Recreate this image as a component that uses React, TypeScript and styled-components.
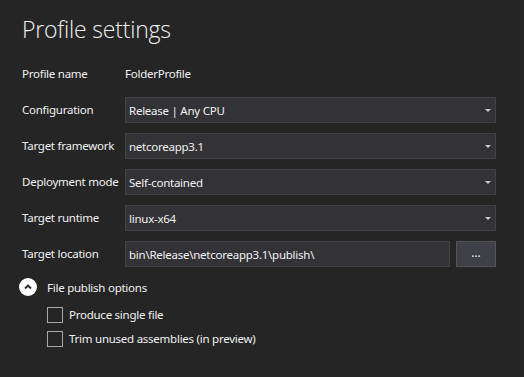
import { Fragment } from "react";
import styled, { createGlobalStyle } from "styled-components";

const GlobalStyle = createGlobalStyle`
  html, body {
    margin: 0;
    background: #252526;
  }
  body {
    font-family: "Noto Sans", "Open Sans", sans-serif;
    color: #f1f1f1;
  }
`;

const Page = styled.div`
  width: 524px;
  height: 377px;
  box-sizing: border-box;
  padding: 13px 28px 0 22px;
  background: #252526;
`;

const Title = styled.h1`
  margin: 0 0 16px 0;
  font-family: "Open Sans", sans-serif;
  font-weight: 300;
  font-size: 23px;
  line-height: 32px;
  color: #f1f1f1;
  letter-spacing: -0.2px;
`;

const Form = styled.div`
  display: grid;
  grid-template-columns: 103px 1fr;
  row-gap: 10px;
  align-items: center;
`;

const Label = styled.div`
  font-size: 11.5px;
  line-height: 26px;
  white-space: nowrap;
  letter-spacing: -0.25px;
`;

const Value = styled.div`
  font-size: 11.5px;
  line-height: 26px;
  letter-spacing: -0.25px;
`;

const Field = styled.div`
  height: 26px;
  box-sizing: border-box;
  display: flex;
  align-items: center;
  justify-content: space-between;
  padding: 0 4px 0 3px;
  background: #333337;
  border: 1px solid #434346;
  font-size: 11.5px;
  letter-spacing: -0.25px;
  flex: 1;
`;

const Caret = styled.span`
  width: 0;
  height: 0;
  border-left: 3px solid transparent;
  border-right: 3px solid transparent;
  border-top: 3px solid #c8c8c8;
  margin-top: 1px;
`;

const PathRow = styled.div`
  display: flex;
  gap: 6px;
`;

const BrowseButton = styled.button`
  width: 40px;
  height: 26px;
  box-sizing: border-box;
  background: #3f3f46;
  border: 1px solid #555558;
  color: #f1f1f1;
  font-family: inherit;
  font-size: 12px;
  padding: 0 0 4px 0;
`;

const Section = styled.div`
  margin-top: 11px;
  display: flex;
  align-items: center;
  gap: 10px;
  margin-left: -3px;
  font-size: 11.5px;
  letter-spacing: -0.25px;
`;

const ExpandIcon = styled.span`
  width: 18px;
  height: 18px;
  border-radius: 50%;
  background: #ffffff;
  display: flex;
  align-items: center;
  justify-content: center;
`;

const Options = styled.div`
  margin-top: 11px;
  margin-left: 25px;
  display: flex;
  flex-direction: column;
  gap: 8px;
`;

const CheckRow = styled.label`
  display: flex;
  align-items: center;
  gap: 6px;
  font-size: 11.5px;
  line-height: 16px;
  letter-spacing: -0.25px;
`;

const Box = styled.span`
  width: 16px;
  height: 16px;
  box-sizing: border-box;
  border: 1px solid #a8a8a8;
  background: #252526;
`;

const dropdowns = [
  ["Configuration", "Release | Any CPU"],
  ["Target framework", "netcoreapp3.1"],
  ["Deployment mode", "Self-contained"],
  ["Target runtime", "linux-x64"],
];

export default function App() {
  return (
    <Page>
      <GlobalStyle />
      <Title>Profile settings</Title>
      <Form>
        <Label>Profile name</Label>
        <Value>FolderProfile</Value>
        {dropdowns.map(([label, value]) => (
          <Fragment key={label}>
            <Label>{label}</Label>
            <Field>
              <span>{value}</span>
              <Caret />
            </Field>
          </Fragment>
        ))}
        <Label>Target location</Label>
        <PathRow>
          <Field>bin\Release\netcoreapp3.1\publish\</Field>
          <BrowseButton>...</BrowseButton>
        </PathRow>
      </Form>
      <Section>
        <ExpandIcon>
          <svg width="10" height="10" viewBox="0 0 10 10">
            <path d="M2 6.5 L5 3.5 L8 6.5" fill="none" stroke="#252526" strokeWidth="1.8" />
          </svg>
        </ExpandIcon>
        File publish options
      </Section>
      <Options>
        <CheckRow>
          <Box />
          Produce single file
        </CheckRow>
        <CheckRow>
          <Box />
          Trim unused assemblies (in preview)
        </CheckRow>
      </Options>
    </Page>
  );
}
